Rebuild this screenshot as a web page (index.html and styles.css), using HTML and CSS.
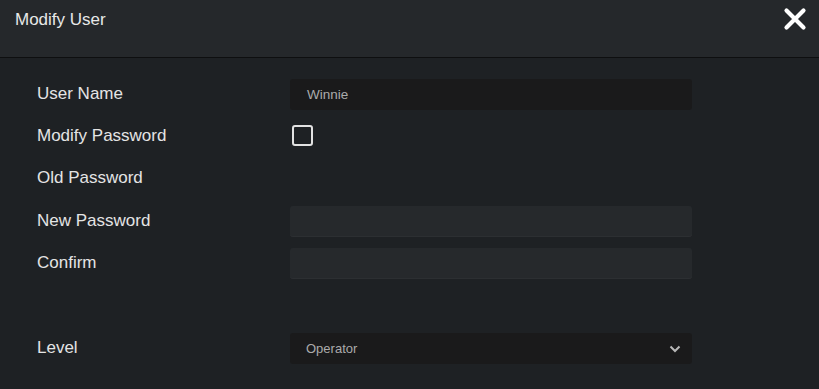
FILE: index.html
```html
<!DOCTYPE html>
<html lang="en">
<head>
    <meta charset="UTF-8">
    <meta name="viewport" content="width=device-width, initial-scale=1.0">
    <title>Modify User</title>
    <link rel="stylesheet" href="styles.css">
</head>
<body>
    <div class="dialog">
        <header class="dialog-head">
            <span class="dialog-title">Modify User</span>
            <button class="close-btn" aria-label="Close">
                <svg width="24" height="24" viewBox="0 0 24 24">
                    <path d="M3.5 3.5 L20.5 20.5 M20.5 3.5 L3.5 20.5" stroke="#fff" stroke-width="4.2" stroke-linecap="round" fill="none"/>
                </svg>
            </button>
        </header>
        <div class="dialog-body">
            <div class="row">
                <label class="label">User Name</label>
                <div class="field field-dark">Winnie</div>
            </div>
            <div class="row">
                <label class="label">Modify Password</label>
                <span class="checkbox"></span>
            </div>
            <div class="row">
                <label class="label">Old Password</label>
            </div>
            <div class="row">
                <label class="label">New Password</label>
                <div class="field field-light"></div>
            </div>
            <div class="row">
                <label class="label">Confirm</label>
                <div class="field field-light"></div>
            </div>
            <div class="row"></div>
            <div class="row row-level">
                <label class="label">Level</label>
                <div class="field field-dark select">
                    <span>Operator</span>
                    <svg width="12" height="8" viewBox="0 0 12 8">
                        <path d="M1.5 1.5 L6 6 L10.5 1.5" stroke="#b8b8b8" stroke-width="2" fill="none"/>
                    </svg>
                </div>
            </div>
        </div>
    </div>
</body>
</html>
```

FILE: styles.css
```css
body {
    margin: 0;
    padding: 0;
    background: #1e2124;
    font-family: "Liberation Sans", Arial, sans-serif;
}
.dialog {
    width: 819px;
    height: 389px;
    background: #1e2124;
    overflow: hidden;
}
.dialog-head {
    height: 57px;
    background: #25282b;
    border-bottom: 1px solid #0e0f10;
    display: flex;
    align-items: flex-start;
    justify-content: space-between;
    padding: 0 12px 0 15px;
}
.dialog-title {
    color: #e8e8e8;
    font-size: 17px;
    line-height: 17px;
    margin-top: 11px;
}
.close-btn {
    background: none;
    border: none;
    padding: 0;
    margin-top: 7px;
    width: 24px;
    height: 24px;
    cursor: pointer;
}
.dialog-body {
    padding: 14px 0 0 37px;
    display: flex;
    flex-direction: column;
}
.row {
    height: 42.3px;
    display: flex;
    align-items: center;
}
.label {
    width: 253px;
    color: #e4e4e4;
    font-size: 17px;
    margin-top: 1px;
}
.row-level .label {
    margin-top: 3px;
}
.field {
    width: 402px;
    height: 31px;
    border-radius: 3px;
    box-sizing: border-box;
    display: flex;
    align-items: center;
    padding: 0 17px;
    font-size: 13.5px;
    color: #ababab;
    margin-top: 3px;
}
.field-dark {
    background: #1a1a1b;
}
.field-light {
    background: #26292c;
    box-shadow: inset 0 -1px 0 #2c2f32;
}
.select {
    justify-content: space-between;
    padding: 0 11px 0 16px;
    margin-top: 4px;
    font-size: 13px;
}
.checkbox {
    width: 21px;
    height: 21px;
    box-sizing: border-box;
    border: 2px solid #e2e2e2;
    border-radius: 3px;
    margin-left: 2px;
    margin-top: 1px;
}
```
